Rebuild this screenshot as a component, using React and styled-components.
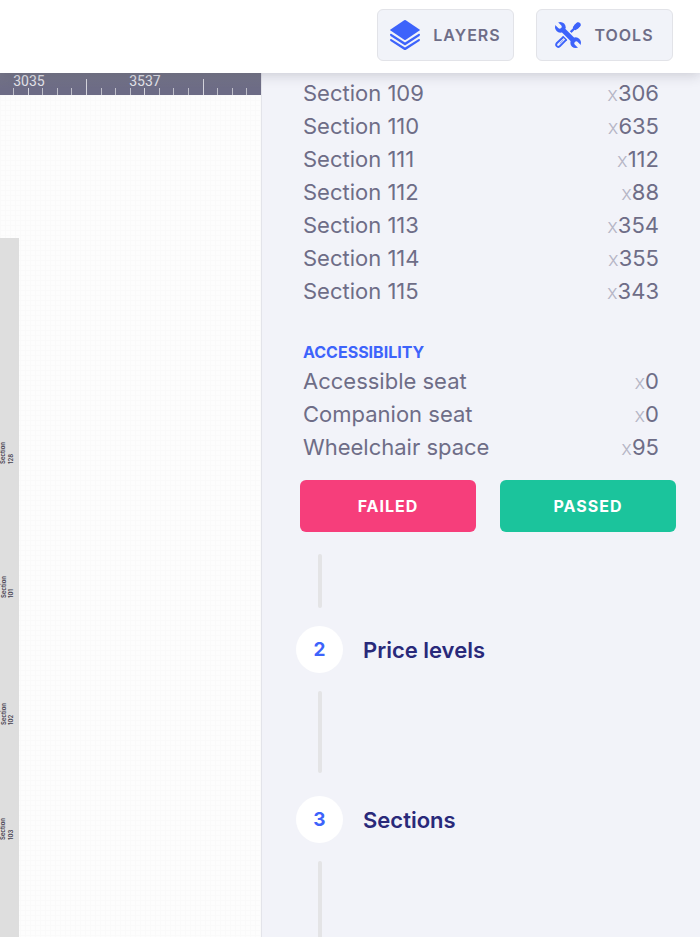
import React from "react";
import styled, { createGlobalStyle } from "styled-components";

const GlobalStyle = createGlobalStyle`
  * {
    box-sizing: border-box;
  }

  body {
    margin: 0;
    font-family: Inter, "Open Sans", sans-serif;
    color: #6e6d87;
    background: #f2f3f9;
  }
`;

const Page = styled.div`
  display: flex;
  flex-direction: column;
  height: 100vh;
  overflow: hidden;
`;

const Header = styled.header`
  position: relative;
  z-index: 1;
  display: flex;
  flex: none;
  justify-content: flex-end;
  gap: 22px;
  padding: 9px 27px 12px;
  background: #ffffff;
  box-shadow: 0 2px 12px rgba(40, 40, 60, 0.2);
`;

const HeaderButton = styled.button`
  display: flex;
  align-items: center;
  justify-content: center;
  gap: 13px;
  width: 137px;
  height: 52px;
  padding: 0;
  border: 1px solid #e2e3e8;
  border-radius: 6px;
  background: #f1f3f9;
  color: #6e6d87;
  font-family: inherit;
  font-size: 16px;
  font-weight: 600;
  letter-spacing: 1px;
  cursor: pointer;
`;

const Main = styled.main`
  display: flex;
  flex: 1;
  min-height: 0;
`;

const Canvas = styled.section`
  display: flex;
  flex: 1;
  flex-direction: column;
  min-width: 0;
  border-right: 1px solid #e3e4ea;
`;

const Ruler = styled.svg`
  display: block;
  flex: none;
  width: 100%;
  height: 22px;
  background: linear-gradient(#777789, #6d6c86 70%);
  font-family: Roboto, sans-serif;
  font-size: 14px;
`;

const Plan = styled.div`
  flex: 1;
  min-height: 0;
  padding-top: 143px;
  background-color: #fdfdfd;
  background-image: linear-gradient(#fafafa 1px, transparent 1px),
    linear-gradient(90deg, #fafafa 1px, transparent 1px);
  background-size: 5px 5px;
`;

const Stand = styled.svg`
  display: block;
  width: 19px;
  height: 100%;
  background: #dedede;
  font-size: 6px;
  font-weight: 600;
`;

const Panel = styled.aside`
  flex: 0 1 438px;
  padding-top: 4px;
  overflow-y: auto;
  scrollbar-width: none;
`;

const CountTable = styled.table`
  width: calc(100% - 82px);
  margin: 0 41px;
  border-collapse: collapse;
  font-size: 22px;
  line-height: 33px;

  & + & {
    margin-top: 32px;
  }

  caption {
    color: #3d63fb;
    font-size: 16px;
    font-weight: 700;
    line-height: 25px;
    text-align: left;
  }

  th,
  td {
    padding: 0;
    font-weight: 400;
    text-align: left;
  }

  td {
    text-align: right;
  }
`;

const Times = styled.span`
  color: #b6b6c6;
  font-size: 20px;
  font-weight: 300;
  line-height: 1;
`;

const Actions = styled.div`
  display: flex;
  gap: 24px;
  margin: 16px 24px 22px 38px;
`;

const ActionButton = styled.button`
  flex: 1;
  height: 52px;
  border: 0;
  border-radius: 6px;
  background: ${(props) => props.$color};
  color: #ffffff;
  font-family: inherit;
  font-size: 16px;
  font-weight: 700;
  letter-spacing: 1px;
  cursor: pointer;
`;

const Connector = styled.div`
  width: 4px;
  height: ${(props) => (props.$short ? "54px" : "82px")};
  margin-left: 56px;
  border-radius: 2px;
  background: #e4e4e6;
`;

const Step = styled.div`
  display: flex;
  align-items: center;
  gap: 20px;
  margin: ${(props) => (props.$first ? "18px" : "23px")} 34px 18px;
`;

const StepNumber = styled.span`
  display: flex;
  align-items: center;
  justify-content: center;
  width: 47px;
  height: 47px;
  border-radius: 50%;
  background: #ffffff;
  color: #3d63fb;
  font-size: 19px;
  font-weight: 700;
`;

const StepTitle = styled.h2`
  margin: 0;
  color: #29297a;
  font-size: 22px;
  font-weight: 600;
`;

const sections = [
  { name: "Section 109", count: 306 },
  { name: "Section 110", count: 635 },
  { name: "Section 111", count: 112 },
  { name: "Section 112", count: 88 },
  { name: "Section 113", count: 354 },
  { name: "Section 114", count: 355 },
  { name: "Section 115", count: 343 },
];

const accessibility = [
  { name: "Accessible seat", count: 0 },
  { name: "Companion seat", count: 0 },
  { name: "Wheelchair space", count: 95 },
];

const standLabels = [
  { number: 128, x: 5, y: 226 },
  { number: 101, x: 6, y: 360 },
  { number: 102, x: 6, y: 487 },
  { number: 103, x: 5, y: 602 },
];

// one tick every 1/8 of a ruler label step
const ticks = Array.from({ length: 140 }, (_, i) => ({
  x: Math.round(14 + (i * 175) / 12),
  tall: i % 8 === 5,
  bright: i % 4 === 1,
}));

const LayersIcon = () => (
  <svg width="30" height="30" viewBox="0 0 30 30" fill="#3d63fb" aria-hidden="true">
    <path d="M14.2.3Q15-.2 15.8.3L29.5 9.4Q30.3 10 29.5 10.6L15.8 19.8Q15 20.3 14.2 19.8L.5 10.6Q-.3 10 .5 9.4Z" />
    <path d="M0 14.8Q0 13.6 1.2 13.8L15 22.6 28.8 13.8Q30 13.6 30 14.8L29.5 15.9 15.7 25Q15 25.5 14.3 25L.5 15.9Z" />
    <path d="M0 20Q0 18.8 1.2 19L15 27.6 28.8 19Q30 18.8 30 20L29.5 21 15.7 30Q15 30.4 14.3 30L.5 21Z" />
  </svg>
);

const ToolsIcon = () => (
  <svg width="26" height="26" viewBox="0 0 78 78" aria-hidden="true">
    <g stroke="#3d63fb" fill="none">
      <path d="M46 31 66 12" strokeWidth="7" />
      <path d="M61 17 70 8" strokeWidth="14" strokeLinecap="round" />
      <path d="M57 10 67 1 77 11 68 21Z" fill="#3d63fb" stroke="none" />
      <path d="M26 44 5 64Q2 68 5 72 9 77 14 73L34 53" strokeWidth="6" strokeLinejoin="round" />
      <path d="M26 44 34 53" strokeWidth="6" strokeLinecap="round" />
      <path d="M14 65 25 54" strokeWidth="2" />
      <path d="M18 18 60 60" strokeWidth="24" stroke="#f1f3f9" />
      <path d="M18 18 60 60" strokeWidth="15" />
    </g>
    <circle cx="16" cy="16" r="16" fill="#3d63fb" />
    <circle cx="62" cy="62" r="16" fill="#3d63fb" />
    <path d="M-2-2 14 14M80 80 64 64" stroke="#f1f3f9" strokeWidth="12" strokeLinecap="round" />
  </svg>
);

const Counts = ({ title, rows }) => (
  <CountTable>
    {title && <caption>{title}</caption>}
    <tbody>
      {rows.map((row) => (
        <tr key={row.name}>
          <th scope="row">{row.name}</th>
          <td>
            <Times>x</Times>
            {row.count}
          </td>
        </tr>
      ))}
    </tbody>
  </CountTable>
);

const App = () => {
  return (
    <Page>
      <GlobalStyle />
      <Header>
        <HeaderButton type="button">
          <LayersIcon />
          LAYERS
        </HeaderButton>
        <HeaderButton type="button">
          <ToolsIcon />
          TOOLS
        </HeaderButton>
      </Header>
      <Main>
        <Canvas>
          <Ruler>
            {ticks.map((tick) => (
              <rect
                key={tick.x}
                x={tick.x - 1}
                y={tick.tall ? 6 : 15}
                width="1"
                height={tick.tall ? 16 : 7}
                fill={tick.bright ? "#d6d6de" : "#c0c0ca"}
              />
            ))}
            <g fill="#e4e4ea" textAnchor="middle">
              <text x="29" y="13">3035</text>
              <text x="145" y="13">3537</text>
            </g>
          </Ruler>
          <Plan>
            <Stand>
              {standLabels.map((label) => (
                <g key={label.number} fill="#45404f">
                  <text transform={`translate(${label.x} ${label.y}) rotate(-90)`}>Section</text>
                  <text transform={`translate(13 ${label.y}) rotate(-90)`}>{label.number}</text>
                </g>
              ))}
            </Stand>
          </Plan>
        </Canvas>
        <Panel>
          <Counts rows={sections} />
          <Counts title="ACCESSIBILITY" rows={accessibility} />
          <Actions>
            <ActionButton type="button" $color="#f63e7b">FAILED</ActionButton>
            <ActionButton type="button" $color="#1bc49c">PASSED</ActionButton>
          </Actions>
          <Connector $short />
          <Step $first>
            <StepNumber>2</StepNumber>
            <StepTitle>Price levels</StepTitle>
          </Step>
          <Connector />
          <Step>
            <StepNumber>3</StepNumber>
            <StepTitle>Sections</StepTitle>
          </Step>
          <Connector />
        </Panel>
      </Main>
    </Page>
  );
};

export default App;
